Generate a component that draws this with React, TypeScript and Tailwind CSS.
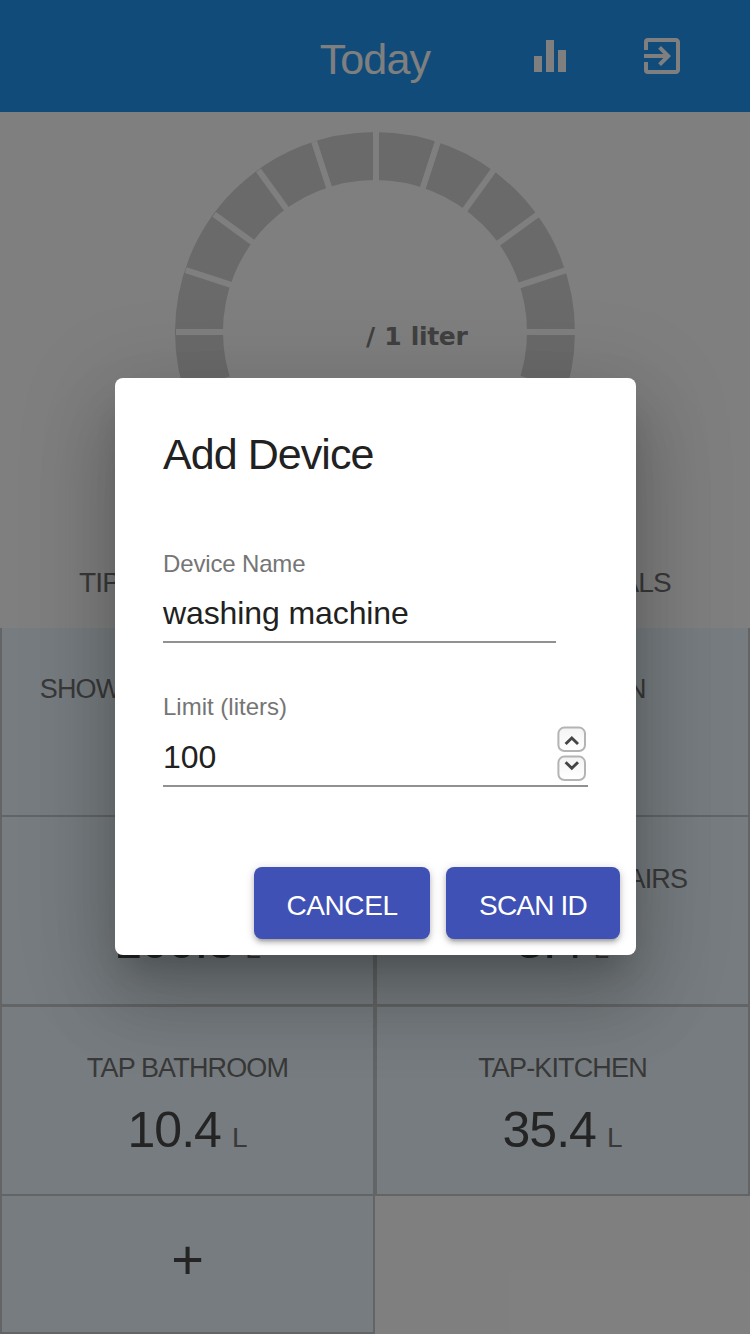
import { MdEqualizer, MdExitToApp } from "react-icons/md";

const SPOKES = Array.from({ length: 20 }, (_, i) => i * 18);

function Gauge() {
  return (
    <svg className="block" width="750" height="420" viewBox="0 0 750 420">
      <circle cx="375" cy="220" r="176" fill="none" stroke="#d5d5d5" strokeWidth="48" />
      {SPOKES.map((a) => (
        <rect key={a} x="373" y="20" width="6" height="50" fill="#fff" transform={`rotate(${a} 376 220)`} />
      ))}
      <text x="366" y="233" fontFamily="DejaVu Sans" fontSize="25" fontWeight="bold" letterSpacing="-0.35" wordSpacing="1.1" fill="#808080">
        / 1 liter
      </text>
    </svg>
  );
}

type CellProps = { name: string; value: string; className: string };

function Cell({ name, value, className }: CellProps) {
  return (
    <div className={`flex flex-col items-center border-x-2 border-[#c6c9cb] bg-[#edf9fe] ${className}`}>
      <div className="text-[27px] leading-8 tracking-[-0.85px] whitespace-nowrap text-[#737373]">{name}</div>
      <div className="mt-4 flex items-baseline gap-[11px] leading-[60px]">
        <span className="text-[50px] tracking-[-1px] text-[#484848]">{value}</span>
        <span className="text-[28px] text-[#737373]">L</span>
      </div>
    </div>
  );
}

function Stepper() {
  return (
    <svg className="block" width="32" height="60" viewBox="0 0 32 60">
      <defs>
        <linearGradient id="key" x1="0" y1="0" x2="0" y2="1">
          <stop offset="0" stopColor="#f4f4f4" />
          <stop offset="1" stopColor="#ffffff" />
        </linearGradient>
      </defs>
      <rect x="2.4" y="4.6" width="26.6" height="23.4" rx="6" fill="url(#key)" stroke="#b4b4b4" strokeWidth="2" />
      <rect x="2.4" y="33.6" width="26.6" height="23.4" rx="6" fill="url(#key)" stroke="#b4b4b4" strokeWidth="2" />
      <path d="M9.6 21L15.8 15l6.2 6M9.6 39.2l6.2 6 6.2-6" fill="none" stroke="#454545" strokeWidth="2.9" />
    </svg>
  );
}

export default function App() {
  return (
    <div className="relative h-[1334px] w-[750px] overflow-hidden bg-white font-['Liberation_Sans',Arial,sans-serif]">
      <header className="flex h-28 items-center bg-[#2196f3] text-white">
        <h1 className="w-[430px] pt-[7px] text-right text-[43px] tracking-[-0.9px]">Today</h1>
        <MdEqualizer className="ml-[96.3px] size-12" />
        <MdExitToApp className="ml-16 size-12" />
      </header>
      <Gauge />
      <div className="flex h-24 justify-between pt-[31px] pr-[79px] pl-[79px] text-[28px] leading-10 tracking-[-0.8px] text-[#737373]">
        <span>TIPS</span>
        <span>GOALS</span>
      </div>
      <div className="grid grid-cols-2 grid-rows-[189px_190px_189px_138px]">
        <Cell name="SHOWER DOWNSTAIRS" value="35.2" className="border-b-2 pt-[45px]" />
        <Cell name="TAP-GARDEN" value="12.6" className="border-b-2 pt-[45px]" />
        <Cell name="TOILET" value="100.3" className="border-b-3 pt-[46px]" />
        <Cell name="SHOWER UPSTAIRS" value="8.4" className="border-b-3 pt-[46px]" />
        <Cell name="TAP BATHROOM" value="10.4" className="border-b-2 pt-[45px]" />
        <Cell name="TAP-KITCHEN" value="35.4" className="border-b-2 pt-[45px]" />
        <div className="flex items-center justify-center border-x-2 border-b-2 border-[#c6c9cb] bg-[#edf9fe] pb-[9px] text-[56px] text-[#484848]">
          +
        </div>
      </div>

      <div className="absolute inset-0 flex items-start justify-center bg-black/50 pt-[378px]">
        <div
          role="dialog"
          className="mr-[-1px] flex h-[577px] w-[521px] flex-col rounded-lg bg-white px-12 text-[#212121] shadow-[0_22px_30px_-14px_rgba(0,0,0,0.2),0_48px_76px_6px_rgba(0,0,0,0.14),0_18px_92px_16px_rgba(0,0,0,0.12)]"
        >
          <h2 className="pt-[51px] text-[43px] leading-[50px] tracking-[-0.95px]">Add Device</h2>
          <div className="mt-[69px] w-[393px] border-b-2 border-[#919191]">
            <div className="text-[24px] leading-8 tracking-[-0.15px] text-[#757575]">Device Name</div>
            <div className="pt-[13px] pb-2 text-[32px] leading-10 tracking-[-0.1px]">washing machine</div>
          </div>
          <div className="mt-12 w-[425px] border-b-2 border-[#919191]">
            <div className="text-[24px] leading-8 text-[#757575]">Limit (liters)</div>
            <div className="flex h-[62px] items-start justify-between">
              <span className="pt-[14px] text-[32px] leading-10">100</span>
              <Stepper />
            </div>
          </div>
          <div className="mt-20 mr-[-32px] flex justify-end gap-4 text-[28px] text-white">
            <button className="h-[72px] w-44 rounded-lg bg-[#3f51b5] pt-1.5 tracking-[-0.4px] shadow-[0_2px_10px_rgba(0,0,0,0.2),0_4px_4px_rgba(0,0,0,0.14),0_6px_2px_-4px_rgba(0,0,0,0.12)]">
              CANCEL
            </button>
            <button className="h-[72px] w-[174px] rounded-lg bg-[#3f51b5] pt-1.5 tracking-[-0.8px] shadow-[0_2px_10px_rgba(0,0,0,0.2),0_4px_4px_rgba(0,0,0,0.14),0_6px_2px_-4px_rgba(0,0,0,0.12)]">
              SCAN ID
            </button>
          </div>
        </div>
      </div>
    </div>
  );
}
